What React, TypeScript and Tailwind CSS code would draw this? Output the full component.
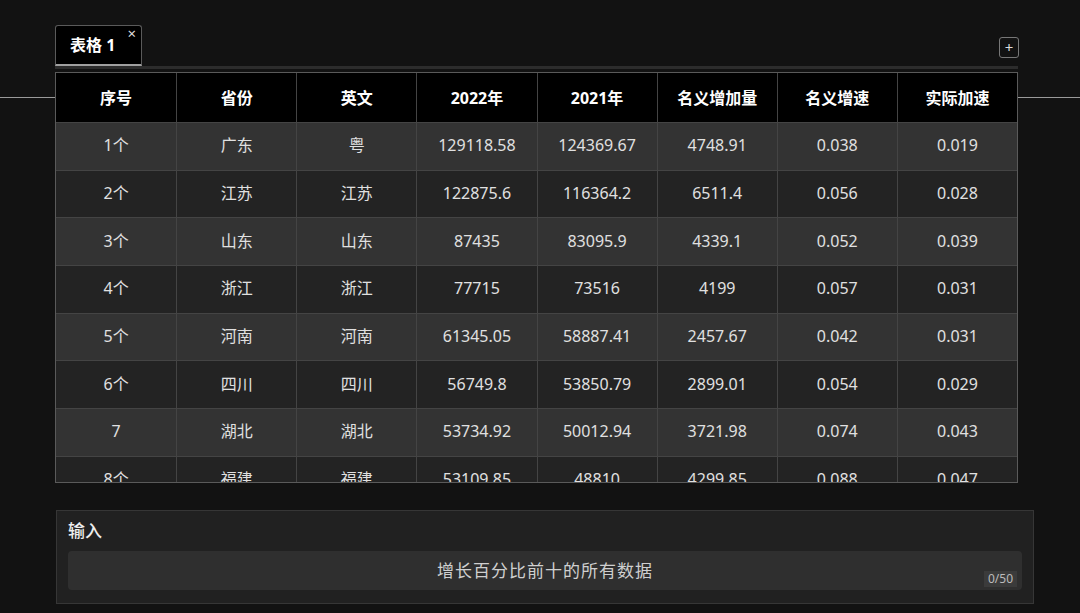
import React from "react";

const headers = ["序号", "省份", "英文", "2022年", "2021年", "名义增加量", "名义增速", "实际加速"];

const rows: string[][] = [
  ["1个", "广东", "粤", "129118.58", "124369.67", "4748.91", "0.038", "0.019"],
  ["2个", "江苏", "江苏", "122875.6", "116364.2", "6511.4", "0.056", "0.028"],
  ["3个", "山东", "山东", "87435", "83095.9", "4339.1", "0.052", "0.039"],
  ["4个", "浙江", "浙江", "77715", "73516", "4199", "0.057", "0.031"],
  ["5个", "河南", "河南", "61345.05", "58887.41", "2457.67", "0.042", "0.031"],
  ["6个", "四川", "四川", "56749.8", "53850.79", "2899.01", "0.054", "0.029"],
  ["7", "湖北", "湖北", "53734.92", "50012.94", "3721.98", "0.074", "0.043"],
  ["8个", "福建", "福建", "53109.85", "48810", "4299.85", "0.088", "0.047"],
];

export default function App() {
  return (
    <div
      className="relative w-[1080px] h-[613px] overflow-hidden bg-[#121212] text-[#e2e2e2]"
      style={{ fontFamily: '"Noto Sans", "Noto Sans CJK SC", sans-serif' }}
    >
      {/* guide line behind the table */}
      <div className="absolute left-0 right-0 top-[97px] h-px bg-[#9a9a9a]" />

      <div className="relative pl-[55px] w-[1018px]">
        {/* Tab bar */}
        <div className="flex items-end justify-between pt-[25px]">
          <div className="relative w-[87px] h-[41px] bg-black border border-[#5a5a5a] border-b-2 border-b-[#a0a0a0] rounded-t-[3px] flex items-center pl-[14px]">
            <span className="text-white font-bold text-[16px]">表格 1</span>
            <span className="absolute right-[5px] top-[0px] text-[15px] leading-none text-[#ddd]">×</span>
          </div>
          <button className="mb-[8px] mr-[-1px] w-[20px] h-[21px] rounded-[3px] border border-[#777] flex items-center justify-center text-[#ddd] text-[15px] leading-none">
            +
          </button>
        </div>
        <div className="h-[3px] bg-[#2c2c2c]" />

        {/* Table */}
        <div className="mt-[3px] h-[411px] overflow-hidden border border-[#5a5a5a] bg-[#232323]">
          <div className="grid grid-cols-8 h-[49px] bg-black">
            {headers.map((h, i) => (
              <div
                key={h}
                className={`flex items-center justify-center text-white font-bold text-[16px] ${i > 0 ? "border-l border-[#444]" : ""}`}
              >
                {h}
              </div>
            ))}
          </div>
          {rows.map((r, ri) => (
            <div
              key={ri}
              className={`grid grid-cols-8 h-[47.7px] border-t border-[#444] ${ri % 2 === 0 ? "bg-[#333333]" : "bg-[#232323]"}`}
            >
              {r.map((c, ci) => (
                <div
                  key={ci}
                  className={`flex items-center justify-center pb-[2px] text-[16px] text-[#e0e0e0] ${ci > 0 ? "border-l border-[#444]" : ""}`}
                >
                  {c}
                </div>
              ))}
            </div>
          ))}
        </div>
      </div>

      {/* Input panel */}
      <div className="ml-[56px] mt-[27px] w-[978px] h-[94px] bg-[#212121] border border-[#363636] px-[11px] pt-[8px]">
        <div className="text-[17px] text-[#eee] font-medium leading-[24px]">输入</div>
        <div className="relative mt-[8px] h-[39px] rounded-[4px] bg-[#2f2f2f] flex items-center justify-center">
          <span className="text-[17px] text-[#cfcfcf] tracking-[1px]">增长百分比前十的所有数据</span>
          <span className="absolute right-[5px] bottom-[3px] bg-[#3b3b3b] px-[4px] text-[12px] leading-[16px] text-[#bbb]">
            0/50
          </span>
        </div>
      </div>
    </div>
  );
}
